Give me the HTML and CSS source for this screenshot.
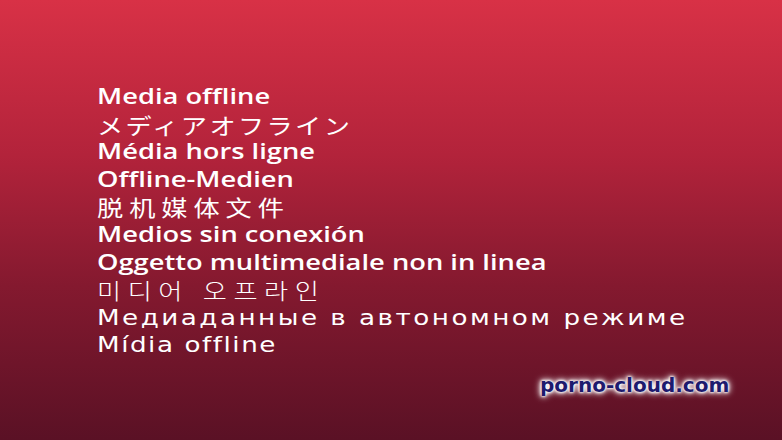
FILE: index.html
```
<!DOCTYPE html>
<html lang="en">

<head>
    <meta charset="UTF-8">
    <meta name="viewport" content="width=device-width, initial-scale=1.0">
    <title>Media offline</title>
    <link rel="stylesheet" href="styles.css">
</head>

<body>
    <div class="screen">
        <div class="messages">
            <div class="line latin">Media offline</div>
            <div class="line cjk" lang="ja">メディアオフライン</div>
            <div class="line latin">Média hors ligne</div>
            <div class="line latin">Offline-Medien</div>
            <div class="line cjk zh" lang="zh">脱机媒体文件</div>
            <div class="line latin">Medios sin conexión</div>
            <div class="line latin">Oggetto multimediale non in linea</div>
            <div class="line ko" lang="ko">미디어 오프라인</div>
            <div class="line wide">Медиаданные в автономном режиме</div>
            <div class="line wide pt">Mídia offline</div>
        </div>
        <div class="watermark">porno-cloud.com</div>
    </div>
</body>

</html>
```

FILE: styles.css
```
* {
    margin: 0;
    padding: 0;
}

body {
    width: 782px;
    height: 440px;
    overflow: hidden;
}

.screen {
    position: relative;
    width: 782px;
    height: 440px;
    overflow: hidden;
    background: linear-gradient(to bottom, #d83146 0%, #b3233b 35%, #84192f 65%, #5a1125 100%);
    color: #ffffff;
}

.messages {
    display: flex;
    flex-direction: column;
    align-items: flex-start;
    padding: 83px 0 0 97px;
}

/* the source picture is stretched sideways */
.line {
    width: max-content;
    height: 27.6px;
    line-height: 27.6px;
    white-space: nowrap;
    transform: scaleX(1.19);
    transform-origin: 0 50%;
}

.latin {
    font-family: "Open Sans", sans-serif;
    font-weight: 600;
    font-size: 21px;
    transform: scaleX(1.3);
}

.cjk {
    font-family: "Noto Sans CJK JP", "Noto Sans CJK SC", sans-serif;
    font-size: 22px;
    letter-spacing: 2px;
}

.zh {
    font-family: "Noto Sans CJK SC", sans-serif;
    letter-spacing: 5px;
}

.ko {
    font-family: "Noto Sans CJK KR", sans-serif;
    font-weight: 300;
    font-size: 22px;
    letter-spacing: 5.5px;
}

.wide {
    font-family: "DejaVu Sans", sans-serif;
    font-size: 22px;
    letter-spacing: 2.1px;
}

.pt {
    letter-spacing: 1.3px;
}

.watermark {
    position: absolute;
    left: 540px;
    top: 373px;
    font-family: "DejaVu Sans", Verdana, sans-serif;
    font-weight: bold;
    font-size: 20px;
    color: #1e1a6e;
    text-shadow: 0 0 2px #fff, 0 0 3px #fff, 0 0 4px #fff, 0 0 6px #fff, 0 0 8px #fff;
}
```
